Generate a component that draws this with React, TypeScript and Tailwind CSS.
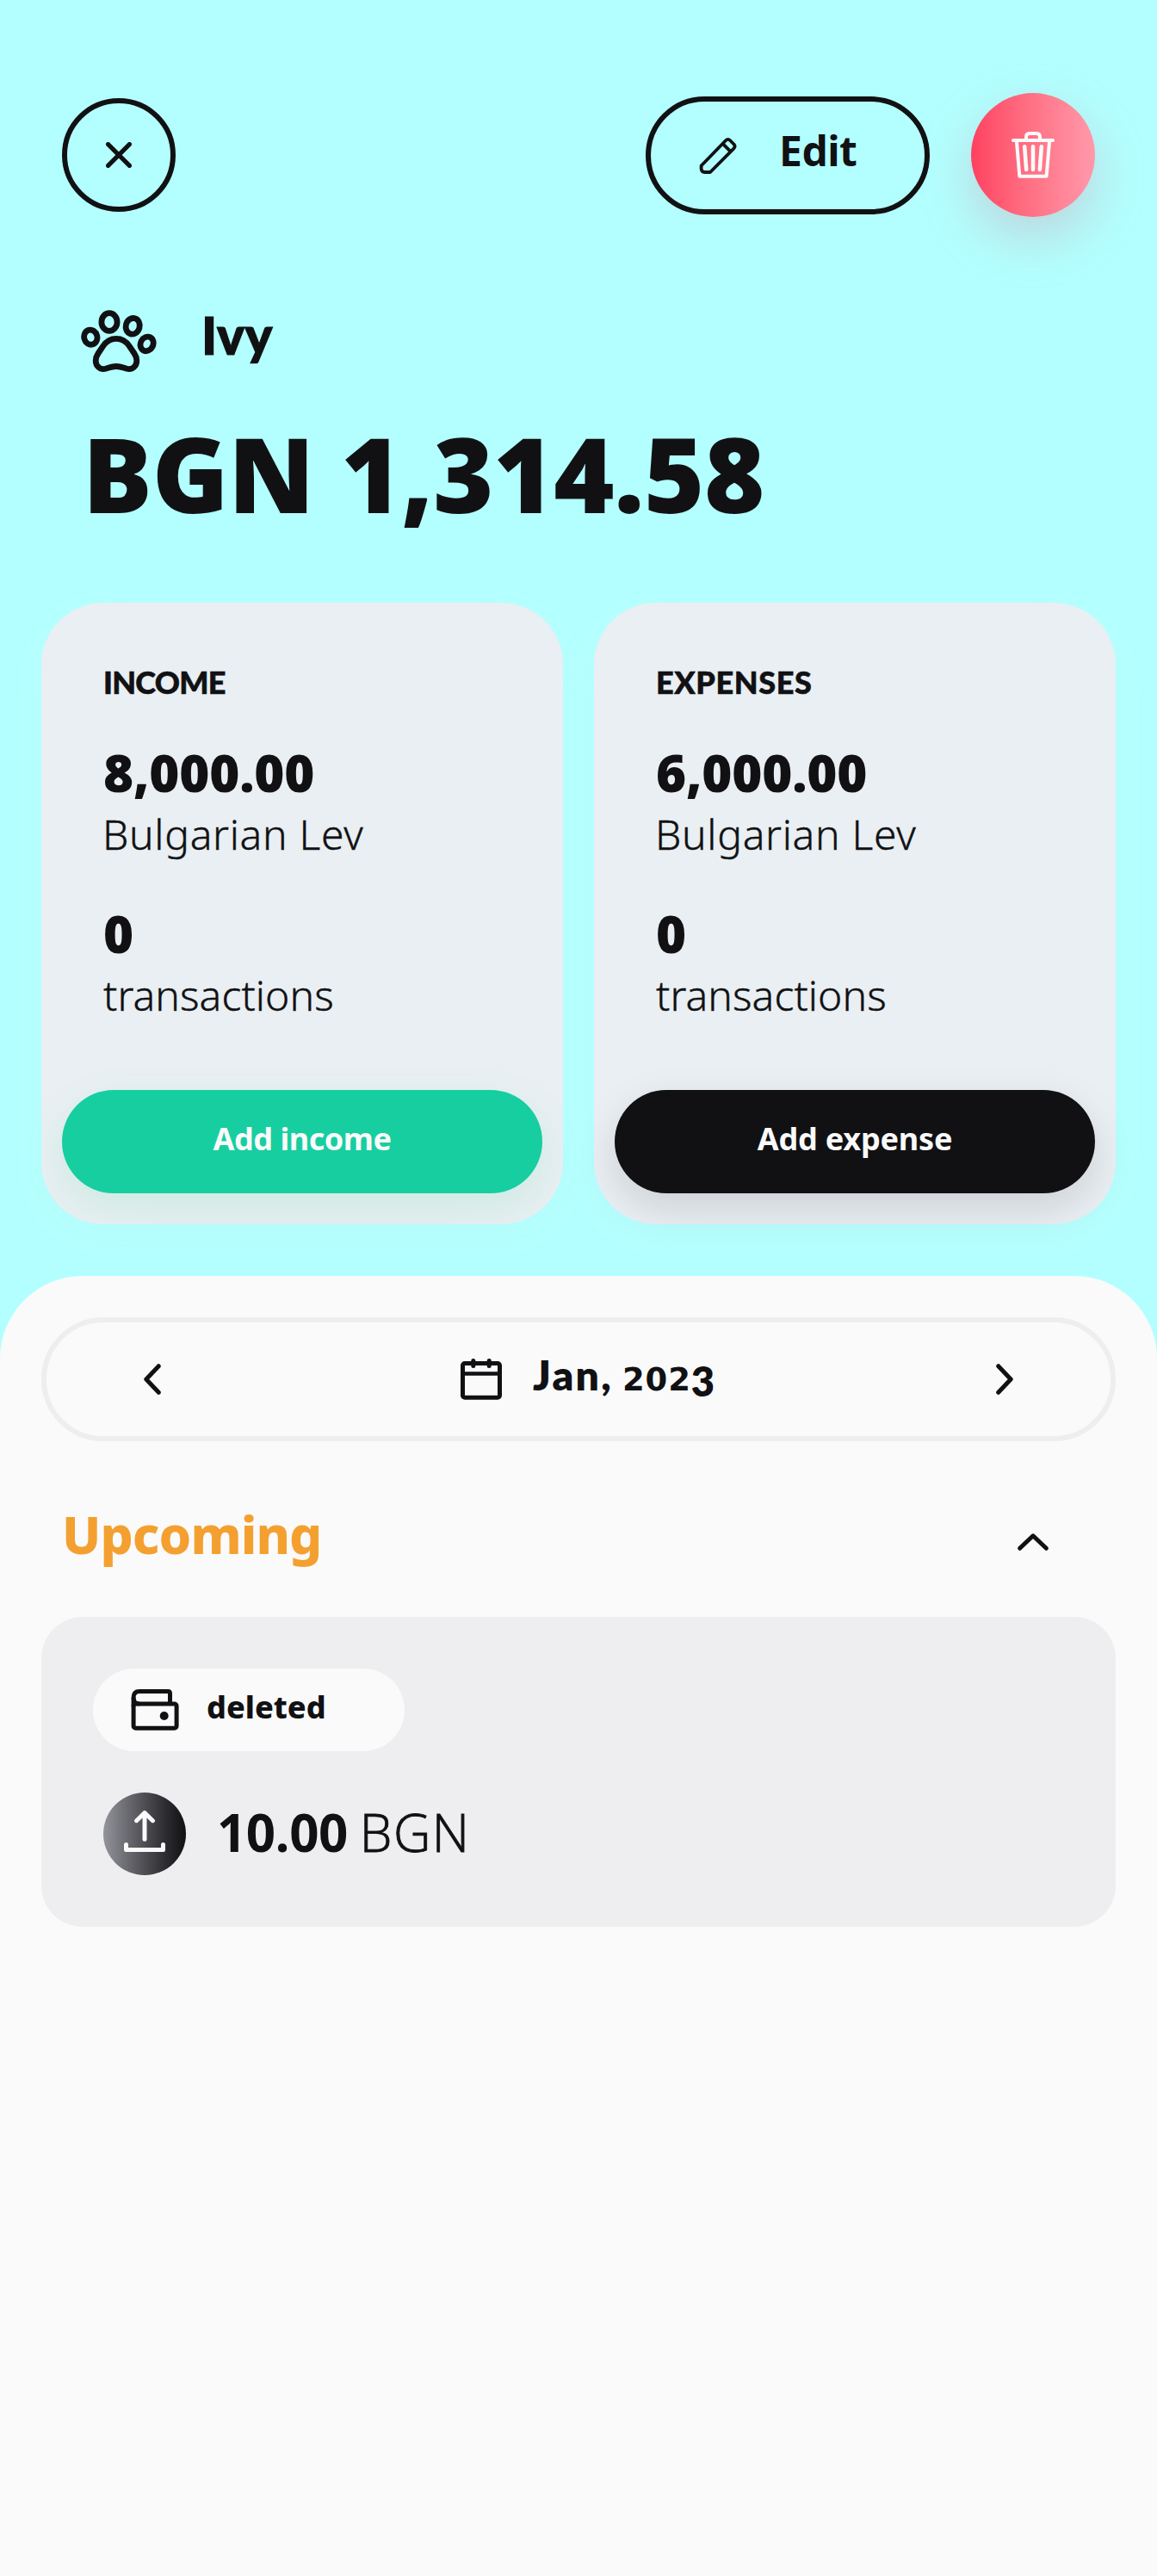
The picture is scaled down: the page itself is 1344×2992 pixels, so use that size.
import React from "react";

const INK = "#111114";

function CloseIcon() {
  return (
    <svg width="30" height="30" viewBox="0 0 30 30" fill="none" stroke={INK} strokeWidth="5.2" strokeLinecap="round">
      <path d="M2.6 2.6 27.4 27.4M27.4 2.6 2.6 27.4" />
    </svg>
  );
}

function PencilIcon() {
  return (
    <svg width="44" height="44" viewBox="0 0 44 44" fill="none" stroke={INK} strokeWidth="3.8" strokeLinejoin="round">
      <path d="M2.6 33.5 31.2 4Q33.7 1.6 36 4L40.5 8.5Q42.6 11 40.5 13.3L13 41H6.6Q2.6 41 2.6 37Z" />
      <path d="M27.5 7.8 36.3 16.6" />
    </svg>
  );
}

function TrashIcon() {
  return (
    <svg width="50" height="54" viewBox="0 0 50 54" fill="none" stroke="#fafafa" strokeWidth="4" strokeLinecap="round" strokeLinejoin="round">
      <path d="M2 10H48" />
      <path d="M17 9V6Q17 2 21 2H29Q33 2 33 6V9" />
      <path d="M6 12 9.4 51.8H40.6L44 12" />
      <path d="M15.2 17.3 17.2 44M25 17.3V44M34.8 17.3 32.8 44" strokeWidth="4.6" />
    </svg>
  );
}

function PawIcon() {
  return (
    <svg width="88" height="72" viewBox="0 0 88 72" fill="none" stroke={INK} strokeWidth="6.8">
      <ellipse cx="11.3" cy="31.7" rx="7.6" ry="8.6" transform="rotate(-15 11.3 31.7)" />
      <ellipse cx="33" cy="14" rx="9.1" ry="10.4" />
      <ellipse cx="60.2" cy="18.8" rx="8" ry="9.4" transform="rotate(15 60.2 18.8)" />
      <ellipse cx="76.6" cy="39.4" rx="7.3" ry="8.6" transform="rotate(28 76.6 39.4)" />
      <path d="M41 33.3C48 33.3 52.5 36.5 56 41.7L62 50.5C64 53.5 64.8 56 64.8 59C64.8 65.5 59.5 69.8 53.5 68.3C49 67 45 65.5 41 65.5C37 65.5 33 67 28.5 68.3C22.5 69.8 17.2 65.5 17.2 59C17.2 56 18 53.5 20 50.5L26 41.7C29.5 36.5 34 33.3 41 33.3Z" />
    </svg>
  );
}

function CalendarIcon() {
  return (
    <svg width="48" height="48" viewBox="0 0 48 48" fill="none" stroke={INK} strokeWidth="5" strokeLinecap="round">
      <rect x="2.5" y="5.5" width="43" height="39.8" rx="2.5" />
      <path d="M3 17.5H45" strokeWidth="4.4" />
      <path d="M14.8 2.5V8.5M33.2 2.5V8.5" />
    </svg>
  );
}

function WalletIcon() {
  return (
    <svg width="56" height="48" viewBox="0 0 56 48" fill="none" stroke={INK} strokeWidth="5" strokeLinejoin="round">
      <rect x="3.1" y="17" width="50" height="28.3" rx="2.5" />
      <path d="M3.1 20V9.7Q3.1 2.6 10 2.6H43.2Q45.5 2.6 45.5 5V17" />
      <path d="M3.1 10Q3.1 17 10 17" />
      <circle cx="38.7" cy="31" r="5" fill={INK} stroke="none" />
    </svg>
  );
}

function UploadIcon() {
  return (
    <svg width="48" height="48" viewBox="24 21 48 48" fill="none" stroke="#fafafa" strokeWidth="5" strokeLinecap="round" strokeLinejoin="round">
      <path d="M48 23.5V54.2M38.6 32.7 48 23.5 57.4 32.7" />
      <path d="M26.5 60.5V66.5H69.5V60.5" />
    </svg>
  );
}

function Chevron({ className }: { className?: string }) {
  return (
    <svg width="24" height="36" viewBox="0 0 24 36" fill="none" stroke={INK} strokeWidth="5" strokeLinecap="round" strokeLinejoin="round" className={className}>
      <path d="M19.3 2.7 4.8 18 19.3 33.3" />
    </svg>
  );
}

type SummaryProps = {
  title: string;
  titleClass: string;
  amount: string;
  action: string;
  actionClass: string;
};

function SummaryCard({ title, titleClass, amount, action, actionClass }: SummaryProps) {
  return (
    <section className="flex h-[722px] w-[606px] flex-col rounded-[72px] bg-[#e9eff2] pt-[70px] shadow-[0_12px_48px_rgba(250,250,250,0.12)]">
      <div className="flex flex-col pl-[72px]">
        <h2 className={titleClass}>{title}</h2>
        <p className="mt-[53px] font-['Open_Sans',sans-serif] text-[60px] leading-[60px] font-extrabold tracking-[-0.2px]">{amount}</p>
        <p className="mt-[14px] -ml-px text-[48px] leading-[56px] font-light tracking-[0.7px] [-webkit-text-stroke:0.4px]">Bulgarian Lev</p>
        <p className="mt-[57px] font-['Open_Sans',sans-serif] text-[60px] leading-[60px] font-extrabold">0</p>
        <p className="mt-[14px] text-[48px] leading-[56px] font-light tracking-[0.1px] [-webkit-text-stroke:0.4px]">transactions</p>
      </div>
      <button className={actionClass}>{action}</button>
    </section>
  );
}

export default function App() {
  return (
    <main className="flex h-[2992px] w-[1344px] flex-col bg-[#b3ffff] font-['Noto_Sans',sans-serif] text-[#111114]">
      <header className="mt-[108px] flex h-[144px] px-[72px]">
        <button className="mt-1.5 flex size-[132px] items-center justify-center rounded-full border-6 border-[#111114]">
          <CloseIcon />
        </button>
        <button className="mt-1 ml-auto flex h-[137px] w-[330px] items-center rounded-full border-6 border-[#111114] pl-14">
          <PencilIcon />
          <span className="mb-[11px] ml-[49px] text-[48px] leading-[64px] font-bold tracking-[-0.5px]">Edit</span>
        </button>
        <button className="ml-12 flex size-[144px] items-center justify-center rounded-full bg-linear-to-r from-[#ff4060] to-[#ff99ab] shadow-[0_24px_60px_rgba(220,90,115,0.26)]">
          <TrashIcon />
        </button>
      </header>

      <div className="mt-[108px] flex h-[72px] items-center pl-[94px]">
        <PawIcon />
        <h1 className="mb-[15px] ml-[52px] font-['Lato',sans-serif] text-[60px] leading-[60px] font-black tracking-[0.5px] [-webkit-text-stroke:1.2px]">Ivy</h1>
      </div>
      <p className="mt-[48px] pl-24 font-['Open_Sans',sans-serif] text-[120px] leading-[140px] font-extrabold whitespace-nowrap tracking-[-0.2px]">BGN 1,314.58</p>

      <div className="mt-[80px] flex gap-9 px-12">
        <SummaryCard
          title="INCOME"
          titleClass="font-['Lato',sans-serif] text-[36px] leading-[44px] font-black tracking-[-0.7px] [-webkit-text-stroke:0.6px]"
          amount="8,000.00"
          action="Add income"
          actionClass="mx-6 mt-[82px] h-[120px] rounded-full bg-[#17cea0] pb-1.5 text-[36px] leading-[44px] font-bold tracking-[-0.45px] text-[#fafafa] shadow-[0_18px_48px_rgba(20,206,140,0.13)]"
        />
        <SummaryCard
          title="EXPENSES"
          titleClass="font-['Lato',sans-serif] text-[36px] leading-[44px] font-black tracking-[0.6px] [-webkit-text-stroke:0.6px]"
          amount="6,000.00"
          action="Add expense"
          actionClass="mx-6 mt-[82px] h-[120px] rounded-full bg-[#111114] pb-1.5 text-[36px] leading-[44px] font-bold tracking-[-0.2px] text-[#fafafa] shadow-[0_18px_48px_rgba(17,17,20,0.13)]"
        />
      </div>

      <div className="mt-[60px] flex flex-1 flex-col rounded-t-[96px] bg-[#fafafa] px-12 pt-12">
        <nav className="flex h-[144px] items-center rounded-full border-6 border-[#eeeef0] px-[111px]">
          <Chevron />
          <div className="ml-[346px] flex items-center">
            <CalendarIcon />
            <span className="mb-[11px] ml-[36px] h-[56px] font-['Lato',sans-serif] text-[48px] leading-[56px] font-extrabold whitespace-nowrap">
              <span className="tracking-[2.3px]">Jan,</span>
              <span className="ml-[11px] font-['DejaVu_Sans',sans-serif] text-[37px] leading-none font-bold tracking-[0.8px]">202</span>
              <span className="relative top-[7px] text-[47px] leading-none">3</span>
            </span>
          </div>
          <Chevron className="ml-auto rotate-180" />
        </nav>

        <div className="mt-[78px] flex h-[60px] justify-between pr-[84px] pl-[24px]">
          <h2 className="text-[60px] leading-[60px] font-extrabold tracking-[-0.9px] text-[#f4a030]">Upcoming</h2>
          <Chevron className="mt-[21px] rotate-90" />
        </div>

        <section className="mt-[66px] flex h-[360px] flex-col rounded-[48px] bg-[#eeeef0] pt-[60px] pl-[60px]">
          <div className="flex h-24 w-[362px] items-center rounded-full bg-[#fafafa] pl-11">
            <WalletIcon />
            <span className="mb-[7px] ml-8 text-[36px] leading-[44px] font-extrabold">deleted</span>
          </div>
          <div className="mt-12 flex items-center pl-3">
            <div className="flex size-24 items-center justify-center rounded-full bg-linear-to-r from-[#94949c] to-[#111114] pb-1.5">
              <UploadIcon />
            </div>
            <p className="mb-[5px] ml-9 flex font-['Open_Sans',sans-serif] text-[60px] leading-[60px] whitespace-nowrap">
              <span className="font-bold tracking-[-0.5px]">10.00</span>
              <span className="ml-[14px] font-light tracking-[1.5px] [-webkit-text-stroke:0.9px]">BGN</span>
            </p>
          </div>
        </section>
      </div>
    </main>
  );
}
